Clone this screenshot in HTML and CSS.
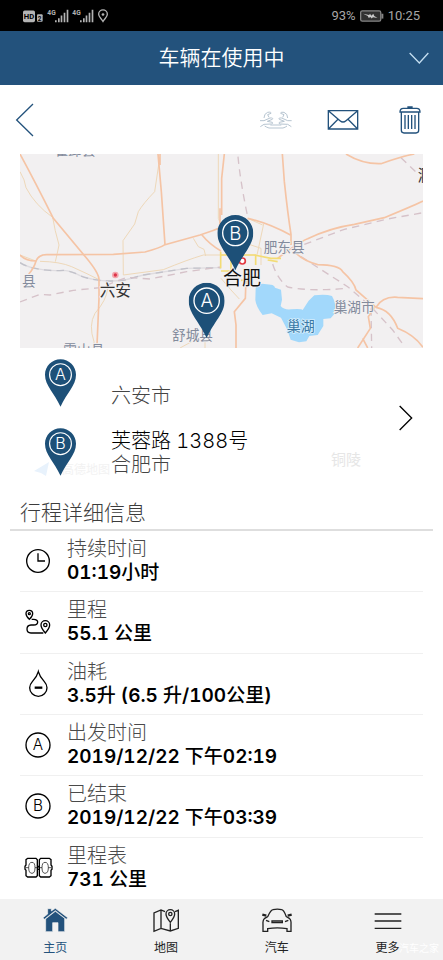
FILE: index.html
```html
<!DOCTYPE html>
<html lang="zh-CN">
<head>
<meta charset="utf-8">
<meta name="viewport" content="width=device-width, initial-scale=1">
<title>车辆在使用中</title>
<link rel="stylesheet" href="styles.css">
</head>
<body>
<svg class="defs" aria-hidden="true">
  <symbol id="pin-a" viewBox="0 0 108 166">
    <path class="pin-body" d="M54 0C24 0 0 24 0 54C0 92 33 118 54 166C75 118 108 92 108 54C108 24 84 0 54 0Z"/>
    <circle class="pin-ring" cx="54" cy="54" r="38"/>
    <text class="pin-letter" x="54" y="74">A</text>
  </symbol>
  <symbol id="pin-b" viewBox="0 0 108 166">
    <path class="pin-body" d="M54 0C24 0 0 24 0 54C0 92 33 118 54 166C75 118 108 92 108 54C108 24 84 0 54 0Z"/>
    <circle class="pin-ring" cx="54" cy="54" r="38"/>
    <text class="pin-letter" x="54" y="74">B</text>
  </symbol>
</svg>

<div class="status">
  <svg class="status-icons" viewBox="69 20 258 50" aria-hidden="true">
    <rect x="69" y="30" width="36" height="35" rx="5"/>
    <text class="hd" x="87" y="56">HD</text>
    <rect x="111" y="41" width="17" height="23" rx="3"/>
    <text class="hd two" x="119" y="60">2</text>
    <text class="net" x="142" y="42">4G</text>
    <path d="M165 59h5v6h-5zM174 53h5v12h-5zM182 45h5v20h-5zM191 37h5v28h-5zM200 28h5v37h-5z"/>
    <text class="net" x="217" y="42">4G</text>
    <path d="M240 59h5v6h-5zM249 53h5v12h-5zM257 45h5v20h-5zM266 37h5v28h-5zM275 28h5v37h-5z"/>
    <path class="place" d="M309 63C303 53 296 49 296 41a13 13 0 0 1 26 0C322 49 315 53 309 63Z"/>
    <circle cx="309" cy="42" r="4"/>
  </svg>
  <div class="status-right">
    <span>93%</span>
    <svg class="battery" viewBox="420 28 74 36" aria-hidden="true">
      <rect class="cell" x="422" y="30" width="62" height="32" rx="5"/>
      <path class="cap" d="M486 39h6v15h-6z"/>
      <path class="bolt" d="M430 39L448 43L451 39L455 45L461 39L464 46L474 52L460 50L456 54L452 49L447 52L444 46Z"/>
    </svg>
    <span>10:25</span>
  </div>
</div>

<header class="title-bar">
  <h1>车辆在使用中</h1>
  <button class="collapse" aria-label="展开">
    <svg width="20" height="12" viewBox="566 155 60 36"><path d="M568 158L597 188L624 158"/></svg>
  </button>
</header>

<nav class="toolbar" aria-label="行程操作">
  <button class="back" aria-label="返回">
    <svg width="20" height="34" viewBox="46 309 60 102"><path d="M100 312L51 360L100 408"/></svg>
  </button>
  <button class="tool faded" aria-label="合并行程">
    <svg width="34" height="20" viewBox="117 328 102 60">
      <path d="M120 360H132L150 352Q161 351 157 356L142 362L157 365Q160 369 154 370L132 371L121 378M132 352Q132 339 143 335Q154 333 153 338L143 342L147 350M215 360H203L185 352Q174 351 178 356L193 362L178 365Q175 369 181 370L203 371L214 378M203 352Q203 339 192 335Q181 333 182 338L192 342L188 350M134 376Q140 380 147 382H189Q196 380 201 376M151 373H184"/>
    </svg>
  </button>
  <button class="tool" aria-label="发送邮件">
    <svg width="32" height="22" viewBox="319 326 96 66">
      <path d="M323 331H411V386H323ZM323 331L358 361Q367 369 376 361L411 331M323 386L352 357M411 386L382 357"/>
    </svg>
  </button>
  <button class="tool" aria-label="删除">
    <svg width="22" height="30" viewBox="534 314 66 90">
      <path d="M541 337V390Q541 398 549 398H585Q593 398 593 390V337M537 335Q537 324 547 324H587Q597 324 597 335ZM559 320H575M552 344V386M562 344V386M572 344V386M582 344V386"/>
    </svg>
  </button>
</nav>

<main>
  <section class="trip">
    <svg class="map" viewBox="60 27 1209 582" role="img" aria-label="行程地图">
      <rect class="land" x="60" y="27" width="1209" height="582"/>
      <g class="minor">
        <path d="M60 80Q75 105 78 128Q105 180 158 217Q164 255 177 300Q172 325 166 350"/>
        <path d="M476 60L464 140Q430 175 415 200L404 237L369 287L370 390M120 349Q180 350 215 365Q260 385 297 404M370 390L490 374Q560 345 610 330H663"/>
        <path d="M323 430Q320 465 285 505Q265 540 282 590V609M580 280L595 305L612 313L617 333M655 27L655 220L663 240M540 609L575 590M615 585V609M60 330L110 349"/>
        <g transform="translate(663 0)"><path d="M0 400L30 435L55 462M128 237L108 330M80 220L125 240M60 290L120 310V360M0 330H105"/></g>
      </g>
      <g class="rail">
        <path d="M60 353Q80 366 110 371Q145 379 190 376Q215 378 240 392Q300 415 375 405L430 390L560 370L663 368"/>
        <path class="dash" d="M60 353Q80 366 110 371Q145 379 190 376Q215 378 240 392Q300 415 375 405L430 390L560 370L663 368"/>
        <path class="dash pink" d="M60 471L120 448L150 450L220 436L300 428L380 397L450 402L560 380L663 366"/>
        <g transform="translate(663 0)">
          <path class="dash pink" d="M51 35Q58 110 80 215M155 357Q168 400 200 426Q270 440 378 430M240 335L380 425L450 485L515 555L545 597M250 298L370 253L500 222L606 203M540 38L592 88M450 490L452 609"/>
        </g>
      </g>
      <g class="road">
        <path d="M60 27Q105 110 160 220L260 340Q297 385 297 404V460L291 600V609"/>
        <path d="M60 330Q78 348 108 348Q116 329 140 329L340 328L435 321Q480 309 495 299L600 270Q640 257 675 242M108 348Q102 370 86 387M474 27L484 140L495 299M604 268Q630 300 663 318M480 27V60M660 190V240"/>
        <g transform="translate(663 0)">
          <path d="M10 27L2 100V210M184 27L190 110Q200 205 210 268V300M80 220Q145 235 210 271M170 340Q235 290 260 281Q330 248 400 238L490 218Q570 185 606 168M375 27Q425 58 480 56Q540 35 580 27M225 325Q250 348 290 359Q355 360 365 380Q400 412 405 435L465 487Q510 495 530 550Q580 570 606 607M465 487Q485 453 530 457L606 461M460 487L442 515L448 550L410 609M425 580L440 609M75 405L73 460L40 500L45 540V609"/>
        </g>
      </g>
      <g transform="translate(663 0)">
        <path class="city-road" d="M0 378H30V330H104V360M75 405L60 406M100 330L150 340H180M140 345L170 350M0 330H60"/>
        <path class="city-road" d="M-1 320V370"/>
        <path class="lake" d="M104 430Q105 417 124 416L150 419Q160 420 162 428L180 434L183 464L179 483Q188 495 210 493Q240 490 245 495L263 467L280 451Q315 447 333 453Q345 475 342 490L345 501L329 520L307 522V543L290 570L265 573L256 589L234 592L209 584L199 554L180 518L152 505L125 510Q105 485 103 465Z"/>
      </g>
      <circle class="halo" cx="346" cy="390" r="10"/><circle class="spot" cx="346" cy="390" r="5"/>
      <circle class="ring" cx="727" cy="348" r="9"/>
      <text class="place-name county" x="164" y="31">霍邱县</text>
      <text class="place-name county" x="66" y="422">县</text>
      <text class="place-name city" x="299" y="452">六安</text>
      <text class="place-name county" x="516" y="586">舒城县</text>
      <text class="place-name county" x="190" y="630">霍山县</text>
      <text class="place-name county" x="791" y="321">肥东县</text>
      <text class="place-name county" x="1001" y="502">巢湖市</text>
      <text class="place-name water" x="860" y="559">巢湖</text>
      <text class="place-name city" x="1253" y="109">滁州</text>
      <text class="place-name capital" x="669" y="419">合肥</text>
      <use href="#pin-b" x="652" y="210" width="108" height="166"/>
      <use href="#pin-a" x="566" y="413" width="108" height="166"/>
    </svg>

    <a class="route" href="#route">
      <span class="stops">
        <span class="stop">
          <svg class="pin" aria-hidden="true"><use href="#pin-a"/></svg>
          <span class="address"><span class="street"></span><span class="town">六安市</span></span>
        </span>
        <span class="stop">
          <svg class="pin" aria-hidden="true"><use href="#pin-b"/></svg>
          <span class="address"><span class="street">芙蓉路 1388号</span><span class="town">合肥市</span></span>
        </span>
      </span>
      <svg class="next" width="16" height="28" viewBox="534 174 48 84" aria-hidden="true"><path d="M539 180L575 216L539 252"/></svg>
      <span class="ghost" aria-hidden="true">铜陵</span>
      <span class="map-brand" aria-hidden="true"><svg width="16" height="16" viewBox="0 0 16 16"><path d="M0 10L15 1L12 15L7 12Z"/></svg>高德地图</span>
    </a>
  </section>

  <section class="details">
    <h2>行程详细信息</h2>
    <dl>
      <div class="row">
        <svg class="glyph" viewBox="61 39 108 108" aria-hidden="true"><circle cx="115" cy="93" r="34"/><path d="M115 70V93H136"/></svg>
        <dt>持续时间</dt><dd>01:19<span>小时</span></dd>
      </div>
      <div class="row">
        <svg class="glyph" viewBox="61 223 108 108" aria-hidden="true"><path d="M89 269Q79 259 79 252A10 10 0 0 1 99 252Q99 259 89 269ZM96 269H102Q114 270 114 277Q114 286 102 286H94Q82 287 82 298Q82 310 94 310H131M137 310Q124 295 124 286A13 13 0 0 1 150 286Q150 295 137 310Z"/><circle cx="89" cy="252" r="3"/><circle cx="137" cy="286" r="5"/></svg>
        <dt>里程</dt><dd>55.1 <span>公里</span></dd>
      </div>
      <div class="row">
        <svg class="glyph" viewBox="61 410 108 108" aria-hidden="true"><path d="M116 427Q112 442 98 457Q90 466 90 475A26 26 0 0 0 142 475Q142 466 134 457Q120 442 116 427Z"/><path class="heavy" d="M105 475H128"/></svg>
        <dt>油耗</dt><dd>3.5<span>升</span> (6.5 <span>升</span>/100<span>公里</span>)</dd>
      </div>
      <div class="row">
        <svg class="glyph" viewBox="61 36 108 108" aria-hidden="true"><circle cx="115" cy="90" r="36"/><text x="115" y="106">A</text></svg>
        <dt>出发时间</dt><dd>2019/12/22 <span>下午</span>02:19</dd>
      </div>
      <div class="row">
        <svg class="glyph" viewBox="61 221 108 108" aria-hidden="true"><circle cx="115" cy="275" r="36"/><text x="115" y="291">B</text></svg>
        <dt>已结束</dt><dd>2019/12/22 <span>下午</span>03:39</dd>
      </div>
      <div class="row">
        <svg class="glyph" viewBox="61 406 108 108" aria-hidden="true"><path d="M84 431H109L113 435V483L109 487H84L79 483V467L76 464V455L79 451V435ZM123 431H149L154 435V451L157 455V464L154 467V483L149 487H123L119 483V435ZM113 455H119M113 464H119"/><path class="thin" d="M97 443Q106 443 106 459Q106 476 97 476Q87 476 87 459Q87 443 97 443ZM136 443Q146 443 146 459Q146 476 136 476Q127 476 127 459Q127 443 136 443ZM79 459H87M106 459H127M146 459H154"/></svg>
        <dt>里程表</dt><dd>731 <span>公里</span></dd>
      </div>
    </dl>
  </section>
</main>

<nav class="tabs" aria-label="主导航">
  <a class="tab active" href="#home" aria-current="page">
    <svg width="26" height="30" viewBox="128 46 78 90"><path class="solid" d="M141 83L168 62L196 83V123H176V96H160V123H139V83Z"/><path class="solid" d="M145 54H156V61L168 53L205 81L201 86L168 60L135 86L131 81L145 70Z"/></svg>
    <span>主页</span>
  </a>
  <a class="tab" href="#map">
    <svg width="28" height="30" viewBox="457 46 84 90"><path d="M496 63L484 58L463 67V122L484 113L512 121L536 113V59L526 63M484 58V113M512 98V121"/><path d="M512 95Q499 79 499 70A13 13 0 0 1 525 70Q525 79 512 95Z"/><circle cx="512" cy="70" r="5"/></svg>
    <span>地图</span>
  </a>
  <a class="tab" href="#car">
    <svg width="34" height="30" viewBox="115 46 102 90"><path d="M138 78Q148 57 154 57Q167 54 180 57Q186 57 194 78L204 84Q209 88 208 102V122H196V114Q167 109 138 114V122H124V102Q123 88 128 84L138 78M151 91H182V96H151ZM133 89L143 93M200 89L190 93"/><path class="heavy" d="M122 72L134 75M210 72L198 75"/></svg>
    <span>汽车</span>
  </a>
  <a class="tab" href="#more">
    <svg width="28" height="30" viewBox="458 46 84 90"><path d="M460 70H540M460 91H540M460 113H540"/></svg>
    <span>更多</span>
  </a>
  <span class="watermark" aria-hidden="true">汽车之家</span>
</nav>
</body>
</html>
```
FILE: styles.css
```css
:root {
  --blue: #23527c;
  --pin: #1d5078;
  --cjk: "Noto Sans CJK SC";
}

* { box-sizing: border-box; }

body {
  margin: 0;
  height: 100vh;
  display: flex;
  flex-direction: column;
  background: #fff;
  color: #000;
  font-family: Inter, var(--cjk), sans-serif;
  font-variant-numeric: tabular-nums;
}

h1, h2, dl, dt, dd { margin: 0; font-weight: 300; }
button { padding: 0; border: 0; background: none; color: inherit; font: inherit; }
a { color: inherit; text-decoration: none; }
svg { display: block; fill: none; stroke: currentColor; stroke-width: 4; }
.defs { position: absolute; width: 0; height: 0; }

.pin-body { fill: var(--pin); stroke: none; }
.pin-ring { fill: none; stroke: #fff; stroke-width: 4; }
.pin-letter { fill: #fff; stroke: none; font-size: 56px; font-weight: 300; text-anchor: middle; }

.status {
  flex: none;
  height: 31px;
  padding: 0 23px;
  display: flex;
  align-items: center;
  justify-content: space-between;
  background: #000;
  color: #a6a6a6;
  font: 13px Roboto, sans-serif;
}
.status-icons { width: 86px; height: 17px; fill: #b4b4b4; stroke: none; }
.status-icons .hd { fill: #000; font-size: 23px; font-weight: 700; text-anchor: middle; }
.status-icons .two { font-size: 19px; }
.status-icons .net { font-size: 20px; font-weight: 700; }
.status-icons .place { fill: none; stroke: #b4b4b4; stroke-width: 4; }
.status-right { display: flex; align-items: center; gap: 4px; }
.battery { width: 24px; height: 12px; stroke: #858585; }
.battery .cell { fill: #303030; }
.battery .cap { fill: #858585; stroke: none; }
.battery .bolt { fill: #c8c8c8; stroke: none; }

.title-bar {
  flex: none;
  height: 54px;
  padding: 0 14px;
  display: grid;
  grid-template-columns: 20px 1fr 20px;
  align-items: center;
  background: var(--blue);
  color: #fff;
}
.title-bar h1 { grid-column: 2; font-size: 21px; line-height: 32px; font-weight: 350; text-align: center; }
.collapse svg { stroke: #c4def0; }

.toolbar {
  flex: none;
  height: 69px;
  display: flex;
  align-items: center;
  color: var(--blue);
}
.back { margin: 0 auto 0 15px; }
.tool { width: 67px; display: grid; place-items: center; }
.faded { color: #b7c5d1; }
.faded svg { stroke-width: 3; }

main {
  flex: 1;
  min-height: 0;
  display: flex;
  flex-direction: column;
  overflow: hidden;
}

.trip { flex: none; margin: 0 20px; }
.map { width: 100%; height: auto; }
.land { fill: #f2f0f1; stroke: none; }
.minor { stroke: #eed8b9; stroke-width: 3; }
.road { stroke: #f5c4a5; stroke-width: 5; }
.rail { stroke: #dfdce0; stroke-width: 4; }
.rail .dash { stroke: #c2c2ca; stroke-dasharray: 22 16; }
.rail .pink { stroke: #d6c2c9; }
.city-road { stroke: #f3dc75; stroke-width: 5; }
.lake { fill: #a2d8fb; stroke: none; }
.halo { fill: #f3a6ad; stroke: none; }
.spot { fill: #dd3549; stroke: none; }
.ring { fill: #fff; stroke: #e33a43; stroke-width: 5; }
.place-name { stroke: #f2f0f1; stroke-width: 5; paint-order: stroke; font-family: var(--cjk), sans-serif; }
.county { fill: #838b9c; font-size: 41px; }
.water { fill: #3978a4; stroke: #d3edfc; font-size: 42px; }
.city { fill: #333; font-size: 47px; }
.capital { fill: #111; font-size: 57px; }

.route {
  position: relative;
  height: 142px;
  padding: 11px 9px 0 25px;
  display: flex;
  align-items: flex-start;
  justify-content: space-between;
}
.stops { display: grid; gap: 21px; }
.stop { display: flex; gap: 35px; }
.pin { width: 31px; height: 48px; }
.address { display: grid; grid-template-rows: 24px 24px; font-size: 20px; line-height: 26px; font-weight: 300; }
.town { color: #444; }
.next { align-self: center; margin-bottom: 14px; }
.ghost { position: absolute; left: 311px; top: 100px; color: #e6e6e6; font-size: 15px; }
.map-brand {
  position: absolute;
  left: 14px;
  top: 112px;
  z-index: -1;
  display: flex;
  align-items: center;
  gap: 12px;
  color: #f2f2f2;
  font-size: 12px;
}
.map-brand svg { fill: #e8f2fc; stroke: none; }

.details { flex: 1; display: flex; flex-direction: column; }
.details h2 {
  margin: 0 10px;
  padding: 7px 10px 0;
  border-bottom: 2px solid #dedede;
  color: #3c3c3c;
  font-size: 21px;
  line-height: 32px;
}
.details dl { flex: 1; margin: 0 20px; display: grid; grid-auto-rows: 1fr; }
.row {
  padding-top: 6px;
  display: grid;
  grid-template-columns: 36px 1fr;
  grid-template-rows: 24px 24px;
  column-gap: 11px;
  align-items: center;
  border-bottom: 1px solid #f0f0f0;
  line-height: 24px;
}
.row:last-child { border: 0; }
.glyph { grid-row: 1 / 3; width: 36px; height: 36px; }
.glyph text { fill: #000; stroke: none; font-size: 46px; font-weight: 300; text-anchor: middle; }
.glyph .heavy { stroke-width: 7; }
.glyph .thin { stroke-width: 2; }
.row dt { color: #4a4a4a; font-size: 20px; }
.row dd { font-size: 19px; font-weight: 600; }
.row dd span { font-weight: 500; }

.tabs {
  position: relative;
  flex: none;
  height: 61px;
  padding-top: 7px;
  display: grid;
  grid-template-columns: repeat(4, 1fr);
  background: #f2f2f2;
  color: #222;
}
.tab { display: flex; flex-direction: column; align-items: center; gap: 4px; font-size: 12px; line-height: 16px; }
.active { color: var(--blue); }
.solid { fill: currentColor; stroke: #f2f2f2; stroke-width: 2; }
.tab .heavy { stroke-width: 7; }
.watermark { position: absolute; right: 4px; bottom: 4px; color: #fff; font-size: 10px; line-height: 16px; }
```
